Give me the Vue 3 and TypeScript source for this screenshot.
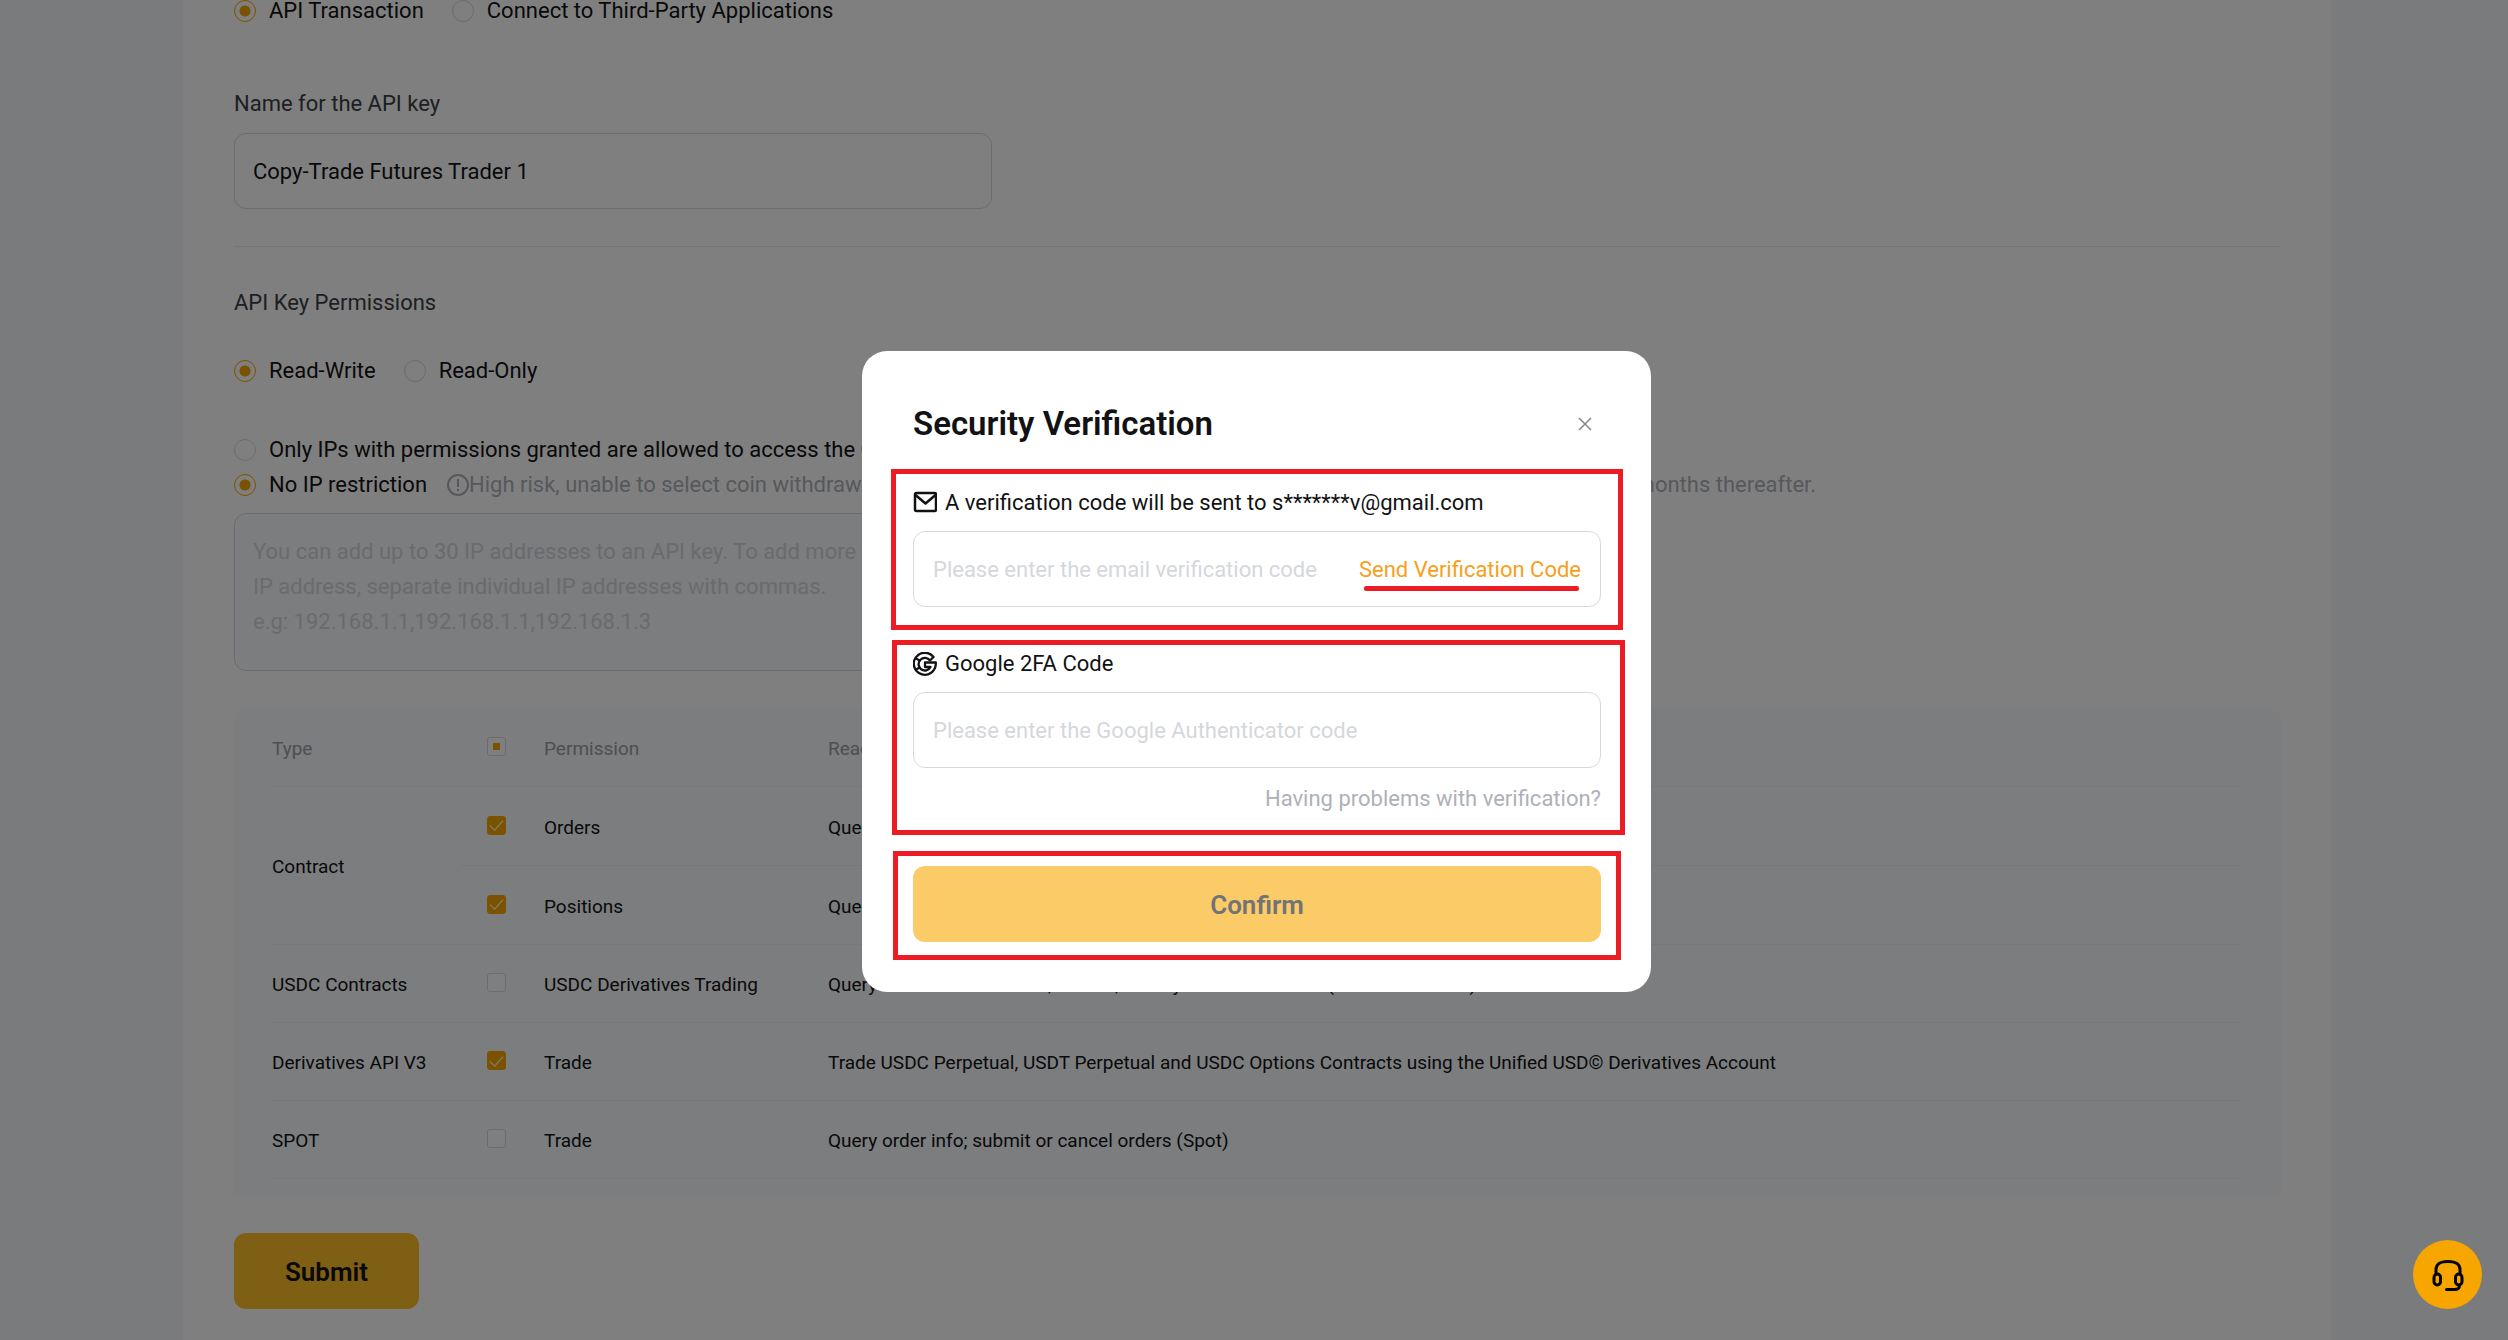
<script setup lang="ts">
import { ref } from 'vue'

interface Permission {
  id: string
  type?: string
  span?: number
  name: string
  detail: string
  checked: boolean
}

const usage = ref('api')
const keyName = ref('Copy-Trade Futures Trader 1')
const access = ref('rw')
const ipMode = ref('none')
const emailCode = ref('')
const googleCode = ref('')

const ipHint =
  'You can add up to 30 IP addresses to an API key. To add more than one\nIP address, separate individual IP addresses with commas.\ne.g: 192.168.1.1,192.168.1.1,192.168.1.3'

const permissions = ref<Permission[]>([
  { id: 'orders', type: 'Contract', span: 2, name: 'Orders', detail: 'Query order info; submit, modify or cancel orders', checked: true },
  { id: 'positions', name: 'Positions', detail: 'Query position info; modify positions', checked: true },
  { id: 'usdc', type: 'USDC Contracts', name: 'USDC Derivatives Trading', detail: 'Query USDC order records, submit, modify or cancel orders (USDC Contracts)', checked: false },
  { id: 'v3', type: 'Derivatives API V3', name: 'Trade', detail: 'Trade USDC Perpetual, USDT Perpetual and USDC Options Contracts using the Unified USD© Derivatives Account', checked: true },
  { id: 'spot', type: 'SPOT', name: 'Trade', detail: 'Query order info; submit or cancel orders (Spot)', checked: false },
])
</script>

<template>
  <div class="page">
    <main class="card">
      <div class="choices first">
        <label class="choice"><input v-model="usage" class="radio" type="radio" name="usage" value="api" />API Transaction</label>
        <label class="choice"><input v-model="usage" class="radio" type="radio" name="usage" value="third" />Connect to Third-Party Applications</label>
      </div>

      <label class="caption name-caption" for="key-name">Name for the API key</label>
      <input id="key-name" v-model="keyName" class="field" type="text" />

      <hr class="divider" />

      <h2 class="caption">API Key Permissions</h2>
      <div class="choices access">
        <label class="choice"><input v-model="access" class="radio" type="radio" name="access" value="rw" />Read-Write</label>
        <label class="choice"><input v-model="access" class="radio" type="radio" name="access" value="ro" />Read-Only</label>
      </div>

      <div class="ip-list">
        <label class="choice"><input v-model="ipMode" class="radio" type="radio" name="ip" value="only" />Only IPs with permissions granted are allowed to access the OpenAPI</label>
        <div class="ip-row">
          <label class="choice"><input v-model="ipMode" class="radio" type="radio" name="ip" value="none" />No IP restriction</label>
          <span class="risk">
            <svg viewBox="0 0 22 22" width="22" height="22" fill="none" stroke="currentColor" stroke-width="2">
              <circle cx="11" cy="11" r="10" />
              <path d="M11 5v8M11 15v2" />
            </svg>High risk, unable to select coin withdrawal permissions. The API key will only be valid for 3 months and will be expired 3 months thereafter.</span>
        </div>
      </div>
      <textarea class="ip-box" aria-label="IP addresses" :placeholder="ipHint"></textarea>

      <section class="table-box">
        <table class="table">
          <colgroup>
            <col class="col-type" /><col class="col-check" /><col class="col-name" /><col />
          </colgroup>
          <thead>
            <tr>
              <th scope="col">Type</th>
              <th class="tick"><input class="check" type="checkbox" aria-label="Select all" :indeterminate="true" /></th>
              <th scope="col">Permission</th>
              <th scope="col">Read-Write</th>
            </tr>
          </thead>
          <tbody>
            <tr v-for="(p, i) in permissions" :key="p.id" :class="{ grouped: i < 2 }">
              <td v-if="p.type" :rowspan="p.span ?? 1">{{ p.type }}</td>
              <td class="tick"><input :id="p.id" v-model="p.checked" class="check" type="checkbox" /></td>
              <td><label :for="p.id">{{ p.name }}</label></td>
              <td>{{ p.detail }}</td>
            </tr>
          </tbody>
        </table>
      </section>

      <button class="submit" type="button">Submit</button>
    </main>

    <div class="overlay">
      <form class="modal" role="dialog" aria-labelledby="modal-title" @submit.prevent>
        <header class="modal-head">
          <h1 id="modal-title">Security Verification</h1>
          <button class="close" type="button" aria-label="Close">
            <svg viewBox="0 0 14 14" width="14" height="14" fill="none" stroke="currentColor" stroke-width="1.5"><path d="M1 1l12 12M13 1L1 13" /></svg>
          </button>
        </header>

        <section class="step mark-email">
          <label class="step-label" for="email-code">
            <svg viewBox="0 0 24 24" width="24" height="24" fill="none" stroke="currentColor" stroke-width="2.500" stroke-linejoin="round">
              <rect x="2" y="2" width="21" height="18" rx="1.500" />
              <path d="M2.500 4l10 8.500 10-8.500" />
            </svg>A verification code will be sent to s*******v@gmail.com
          </label>
          <div class="code-box">
            <input id="email-code" v-model="emailCode" type="text" placeholder="Please enter the email verification code" />
            <button class="send" type="button">Send Verification Code</button>
          </div>
        </section>

        <section class="step mark-google">
          <label class="step-label" for="google-code">
            <svg viewBox="0 0 24 24" width="24" height="24" fill="none" stroke="currentColor" stroke-width="2.300" stroke-linejoin="round">
              <path d="M17 8.500L20.500 5A11 11 0 1 0 22.800 12V10.500H12V15H17.500A6.300 6.300 0 1 1 17 8.500" />
              <path d="M3 6.500l4.500 2.500M3 17.500l4.500-2.500" />
            </svg>Google 2FA Code
          </label>
          <div class="code-box">
            <input id="google-code" v-model="googleCode" type="text" placeholder="Please enter the Google Authenticator code" />
          </div>
          <a class="help" href="#">Having problems with verification?</a>
        </section>

        <div class="step mark-confirm">
          <button class="confirm" type="submit">Confirm</button>
        </div>
      </form>
    </div>

    <button class="support" type="button" aria-label="Customer support">
      <svg viewBox="0 0 32 32" width="32" height="32" fill="none" stroke="#000" stroke-width="3" stroke-linecap="round" stroke-linejoin="round">
        <path d="M4 14v-3C4 4 9 2.500 16 2.500S28 4 28 11v3" />
        <rect x="2" y="15" width="6.500" height="11" rx="3.200" />
        <rect x="23.500" y="15" width="6.500" height="11" rx="3.200" />
        <path d="M27.500 26c0 4-2 4.500-5 4.500h-8" />
      </svg>
    </button>
  </div>
</template>

<style>
body {
  margin: 0;
  background: #f5f7fa;
}
</style>

<style scoped>
.page,
.page * {
  box-sizing: border-box;
}

.page {
  min-height: 100vh;
  padding: 0 177px 0 183px;
  background: #f5f7fa;
  color: #121214;
  font: 22px/36px Roboto, "Liberation Sans", sans-serif;
}

input,
textarea,
button {
  font: inherit;
  color: inherit;
}

button {
  padding: 0;
  border: 0;
  background: none;
  cursor: pointer;
}

.card {
  display: flex;
  flex-direction: column;
  min-height: 100vh;
  padding: 0 50px 31px 51px;
  background: #fff;
}

.choices {
  display: flex;
  gap: 28px;
}

.first {
  line-height: 22px;
}

.choice {
  display: flex;
  align-items: center;
  gap: 13px;
  white-space: nowrap;
}

.radio {
  appearance: none;
  flex: none;
  width: 22px;
  height: 22px;
  margin: 0;
  border: 1px solid #d5d8de;
  border-radius: 50%;
}

.radio:checked {
  border-color: #f7a600;
  background: radial-gradient(circle, #f7a600 5px, transparent 6px);
}

.caption {
  margin: 0;
  color: #3b3f46;
  font-size: 22px;
  font-weight: 400;
  line-height: 36px;
}

.name-caption {
  margin-top: 64px;
}

.field {
  width: 758px;
  height: 76px;
  margin-top: 11px;
  padding: 0 18px;
  border: 1px solid #d5d8de;
  border-radius: 12px;
  background: #fff;
}

.divider {
  width: 100%;
  margin: 37px 0 38px;
  border: 0;
  border-top: 1px solid #ebedf0;
}

.access {
  margin-top: 32px;
}

.ip-list {
  margin-top: 43px;
  line-height: 35px;
}

.ip-row {
  display: flex;
  gap: 20px;
}

.risk {
  display: flex;
  align-items: center;
  color: #adb1b8;
  white-space: nowrap;
}

.ip-box {
  display: block;
  width: 758px;
  height: 158px;
  margin-top: 11px;
  padding: 20px 18px;
  border: 1px solid #d5d8de;
  border-radius: 12px;
  background: #f8fafd;
  line-height: 35px;
  overflow: hidden;
  resize: none;
  white-space: pre;
}

::placeholder {
  color: #d5d7dc;
  opacity: 1;
}

.table-box {
  margin-top: 38px;
  padding: 0 39px 16px 38px;
  border-radius: 12px 12px 0 0;
  background: #f8fafd;
}

.table {
  width: 100%;
  border-collapse: separate;
  border-spacing: 0;
  table-layout: fixed;
  font-size: 19px;
  line-height: 30px;
}

.col-type {
  width: 189px;
}

.col-check {
  width: 83px;
}

.col-name {
  width: 284px;
}

.table th,
.table td {
  height: 78px;
  padding: 3px 0 0;
  border-bottom: 1px solid #eef0f3;
  text-align: left;
  font-weight: 400;
  vertical-align: middle;
}

.table th {
  color: #9a9ea6;
}

.table .grouped td {
  height: 79px;
}

.table .tick {
  padding: 0 12px 2px 0;
  text-align: center;
  line-height: 0;
}

.check {
  appearance: none;
  display: inline-grid;
  place-items: center;
  width: 19px;
  height: 19px;
  margin: 0;
  border: 1px solid #d5d8de;
  border-radius: 3px;
  background: #fff;
}

.check:indeterminate::before {
  content: "";
  width: 7px;
  height: 7px;
  background: #f7a600;
}

.check:checked {
  border-color: #f7a600;
  background: #f7a600;
}

.check:checked::before {
  content: "";
  width: 12px;
  height: 6px;
  margin-bottom: 3px;
  border: solid #fff;
  border-width: 0 0 1px 1px;
  transform: rotate(-48deg);
}

.submit,
.confirm {
  height: 76px;
  padding-top: 2px;
  border-radius: 12px;
  font-size: 26px;
  font-weight: 600;
}

.submit {
  align-self: flex-start;
  width: 185px;
  margin-top: 38px;
  background: #ffbe28;
}

.overlay {
  position: fixed;
  inset: 0;
  display: flex;
  align-items: center;
  justify-content: center;
  padding: 3px 0 0 5px;
  background: rgba(0, 0, 0, 0.5);
}

.modal {
  width: 789px;
  max-width: 100%;
  padding: 50px 50px 50px 51px;
  border-radius: 25px;
  background: #fff;
}

.modal-head {
  display: flex;
  align-items: center;
  justify-content: space-between;
  padding-right: 9px;
}

.modal-head h1 {
  margin: 0;
  font-size: 33px;
  font-weight: 600;
  line-height: 46px;
}

.close {
  display: flex;
  color: #81858c;
}

.step {
  position: relative;
  display: flex;
  flex-direction: column;
}

.step::after {
  content: "";
  position: absolute;
  border: 5px solid #ed1c24;
  pointer-events: none;
}

.mark-email {
  margin-top: 38px;
}

.mark-email::after {
  inset: -16px -22px -23px;
}

.mark-google {
  margin-top: 39px;
}

.mark-google::after {
  inset: -6px -24px -18px -21px;
}

.mark-confirm {
  margin-top: 49px;
}

.mark-confirm::after {
  inset: -15px -20px -18px;
}

.step-label {
  display: flex;
  align-items: center;
  gap: 8px;
}

.code-box {
  display: flex;
  align-items: center;
  height: 76px;
  margin-top: 10px;
  padding: 2px 19px 0;
  border: 1px solid #d5d8de;
  border-radius: 12px;
}

.code-box input {
  flex: 1;
  min-width: 0;
  padding: 0;
  border: 0;
  outline: 0;
  background: none;
}

.send {
  position: relative;
  color: #f7a01b;
}

.send::after {
  content: "";
  position: absolute;
  right: 2px;
  bottom: -3px;
  left: 5px;
  height: 5px;
  border-radius: 2px;
  background: #ed1c24;
}

.help {
  align-self: flex-end;
  margin-top: 13px;
  color: #adb1b8;
  text-decoration: none;
}

.confirm {
  background: #facb66;
  color: #717377;
}

.support {
  position: fixed;
  right: 26px;
  bottom: 31px;
  display: grid;
  place-items: center;
  width: 69px;
  height: 69px;
  border-radius: 50%;
  background: #f7a600;
}
</style>
